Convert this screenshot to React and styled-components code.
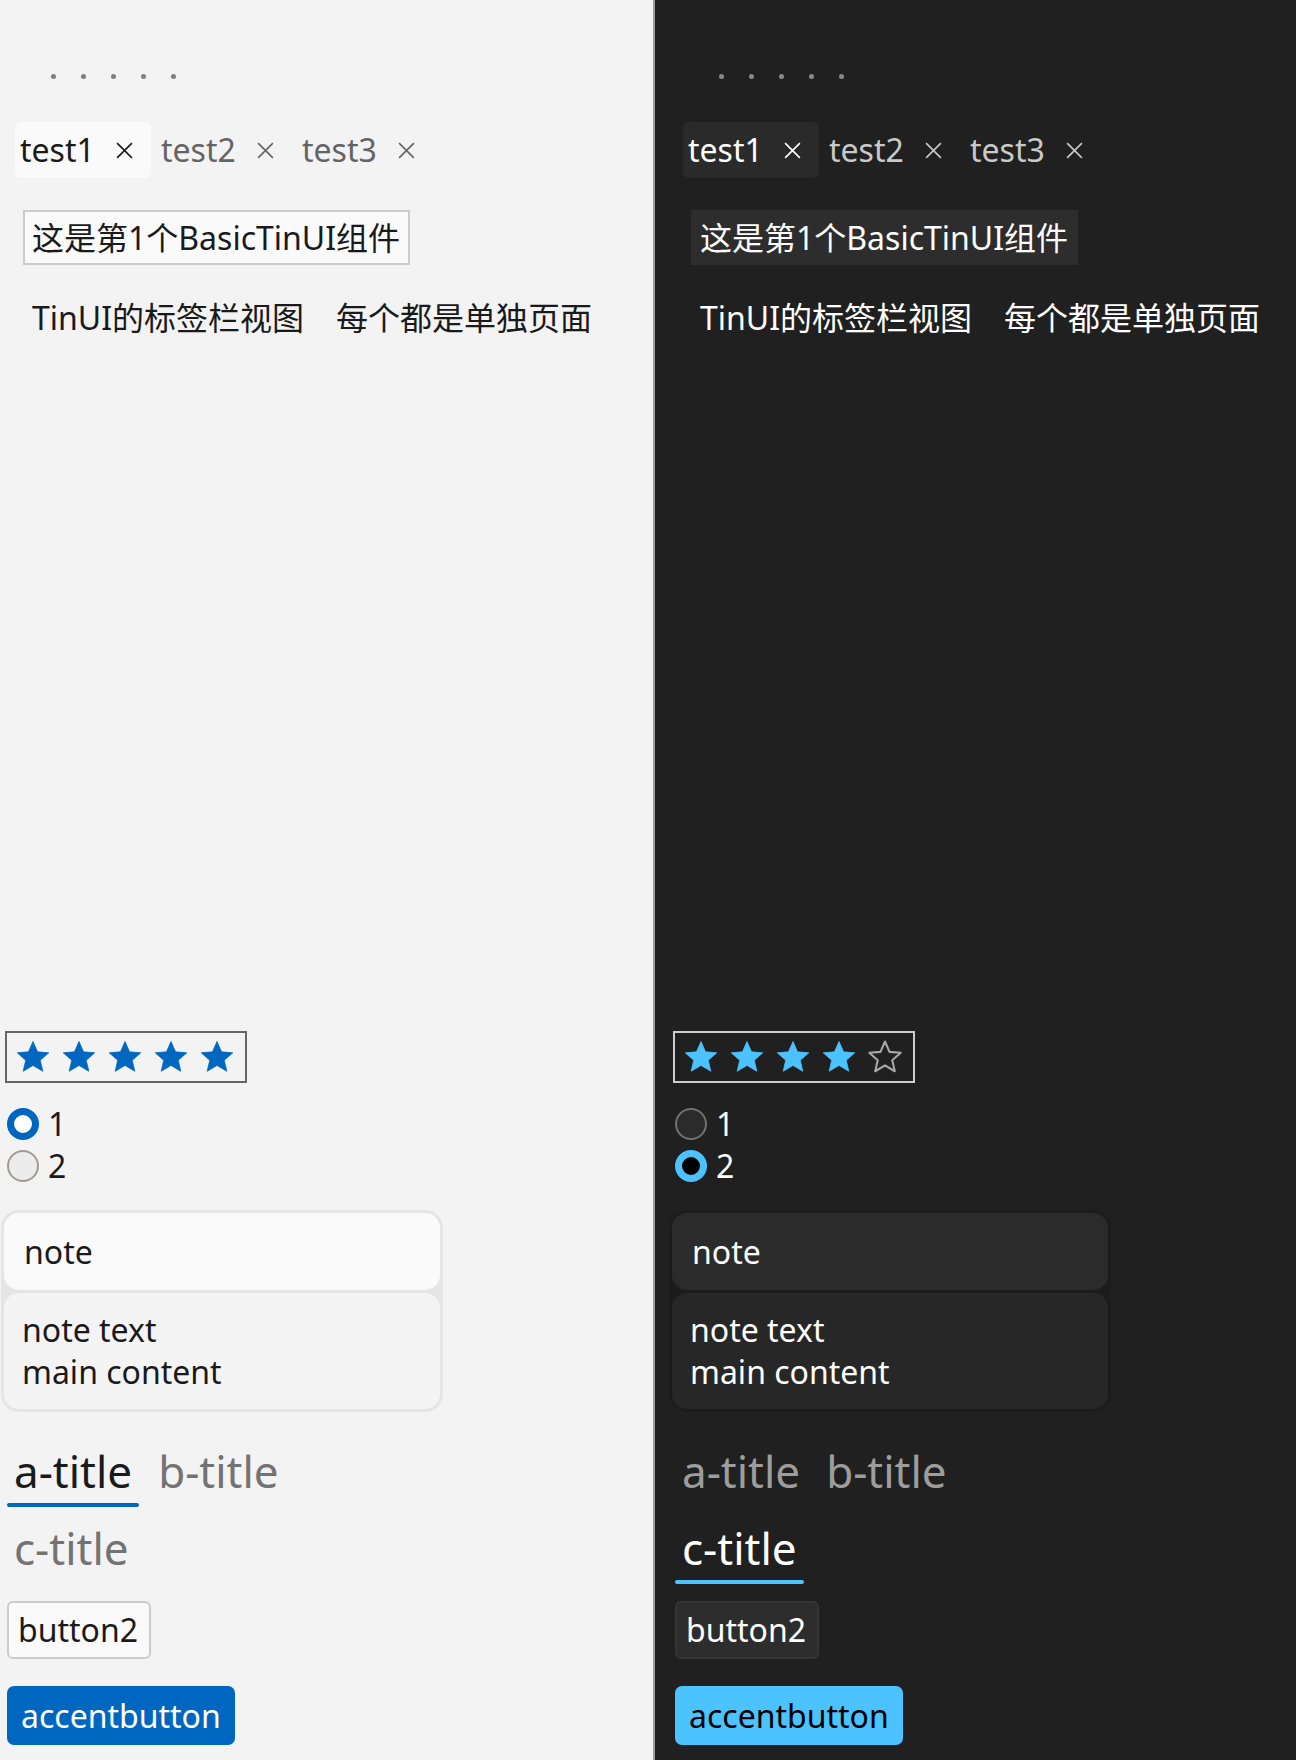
import React, { useState } from 'react';
import styled, { createGlobalStyle, ThemeProvider } from 'styled-components';

const GlobalStyle = createGlobalStyle`
  body {
    margin: 0;
    padding: 0;
    font-family: "Noto Sans", "Noto Sans CJK SC", sans-serif;
  }
`;

const light = {
  bg: '#f3f3f3',
  text: '#1a1a1a',
  muted: '#646464',
  dot: '#7f7f7f',
  tabActive: '#fafafa',
  labelBg: '#fafafa',
  labelBorder: '#cccccc',
  starBorder: '#666666',
  accent: '#0067c0',
  starEmpty: '#9a9a9a',
  radioBg: '#ececec',
  radioBorder: '#a19c98',
  radioCenter: '#ffffff',
  noteOuter: '#e5e5e5',
  noteHead: '#fafafa',
  noteBody: '#f4f4f4',
  titleMuted: '#737373',
  btnBg: '#fafafa',
  btnBorder: '#cccccc',
  accentText: '#ffffff',
  offset: 0,
};

const dark = {
  bg: '#202020',
  text: '#ffffff',
  muted: '#c9c9c9',
  dot: '#8a8a8a',
  tabActive: '#2a2a2a',
  labelBg: '#2d2d2d',
  labelBorder: '#2d2d2d',
  starBorder: '#cccccc',
  accent: '#4cc2ff',
  starEmpty: '#a8a8a8',
  radioBg: '#2b2b2b',
  radioBorder: '#727272',
  radioCenter: '#000000',
  noteOuter: '#1c1c1c',
  noteHead: '#2b2b2b',
  noteBody: '#272727',
  titleMuted: '#9d9d9d',
  btnBg: '#2d2d2d',
  btnBorder: '#353535',
  accentText: '#000000',
  offset: 13,
};

const Page = styled.div`
  display: grid;
  grid-template-columns: 653px 2px 1fr;
  min-height: 1760px;
  width: 1296px;
`;

const Divider = styled.div`
  background: #9a9a9a;
`;

const Panel = styled.div`
  display: flex;
  flex-direction: column;
  align-items: flex-start;
  background: ${(p) => p.theme.bg};
  color: ${(p) => p.theme.text};
  padding-left: ${(p) => p.theme.offset}px;
  font-size: 32px;
  line-height: 44px;
  overflow: hidden;
`;

const Dots = styled.div`
  display: flex;
  gap: 25px;
  margin: 74px 0 0 51px;
`;

const Dot = styled.span`
  width: 5px;
  height: 5px;
  border-radius: 50%;
  background: ${(p) => p.theme.dot};
`;

const TabBar = styled.div`
  display: flex;
  gap: 5px;
  margin: 43px 0 0 15px;
`;

const Tab = styled.div`
  display: flex;
  align-items: center;
  box-sizing: border-box;
  width: 136px;
  height: 56px;
  padding: 0 17px 0 5px;
  border-radius: 6px;
  background: ${(p) => (p.$active ? p.theme.tabActive : 'transparent')};
  color: ${(p) => (p.$active ? p.theme.text : p.theme.muted)};
`;

const Close = styled.svg`
  margin-left: auto;
  width: 19px;
  height: 19px;
`;

const Label = styled.div`
  margin: 32px 0 0 23px;
  height: 51px;
  line-height: 51px;
  padding: 0 8px 0 7px;
  background: ${(p) => p.theme.labelBg};
  border: 2px solid ${(p) => p.theme.labelBorder};
`;

const TextRow = styled.div`
  display: flex;
  gap: 32px;
  margin: 31px 0 0 32px;
`;

const StarBox = styled.div`
  display: flex;
  align-items: center;
  gap: 8px;
  box-sizing: border-box;
  width: 242px;
  height: 52px;
  margin: 691px 0 0 5px;
  padding-left: 7px;
  border: 2px solid ${(p) => p.theme.starBorder};
`;

const RadioGroup = styled.div`
  display: flex;
  flex-direction: column;
  margin: 20px 0 0 7px;
`;

const RadioRow = styled.label`
  display: flex;
  align-items: center;
  gap: 9px;
  height: 42px;
`;

const RadioDot = styled.span`
  box-sizing: border-box;
  width: 32px;
  height: 32px;
  border-radius: 50%;
  background: ${(p) => (p.$on ? p.theme.radioCenter : p.theme.radioBg)};
  border: ${(p) => (p.$on ? `7px solid ${p.theme.accent}` : `2px solid ${p.theme.radioBorder}`)};
`;

const Note = styled.div`
  box-sizing: border-box;
  width: 442px;
  margin: 23px 0 0 1px;
  padding: 3px;
  border-radius: 18px;
  background: ${(p) => p.theme.noteOuter};
  display: flex;
  flex-direction: column;
  gap: 3px;
`;

const NoteHead = styled.div`
  height: 77px;
  line-height: 77px;
  padding-left: 20px;
  border-radius: 15px;
  background: ${(p) => p.theme.noteHead};
`;

const NoteBody = styled.div`
  box-sizing: border-box;
  height: 116px;
  padding: 16px 18px 0;
  line-height: 42px;
  border-radius: 15px;
  background: ${(p) => p.theme.noteBody};
`;

const TitleBar = styled.div`
  display: flex;
  flex-wrap: wrap;
  column-gap: 12px;
  row-gap: 14px;
  width: 300px;
  margin: 32px 0 0 7px;
`;

const TitleItem = styled.div`
  display: flex;
  flex-direction: column;
  align-items: stretch;
  padding: 0 7px;
  font-size: 44px;
  line-height: 54px;
  color: ${(p) => (p.$active ? p.theme.text : p.theme.titleMuted)};
  &::after {
    content: '';
    height: 4px;
    margin: 5px -7px 0;
    border-radius: 2px;
    background: ${(p) => (p.$active ? p.theme.accent : 'transparent')};
  }
`;

const Button = styled.button`
  font: inherit;
  height: 58px;
  margin: 17px 0 0 7px;
  padding: 0 11px 0 9px;
  border-radius: 6px;
  border: 2px solid ${(p) => p.theme.btnBorder};
  background: ${(p) => p.theme.btnBg};
  color: ${(p) => p.theme.text};
`;

const AccentButton = styled(Button)`
  height: 59px;
  margin-top: 27px;
  padding: 0 12px;
  border-radius: 7px;
  border-color: ${(p) => p.theme.accent};
  background: ${(p) => p.theme.accent};
  color: ${(p) => p.theme.accentText};
`;

const StarSvg = styled.svg`
  width: 38px;
  height: 38px;
  fill: ${(p) => (p.$filled ? p.theme.accent : 'none')};
  stroke: ${(p) => (p.$filled ? p.theme.accent : p.theme.starEmpty)};
  stroke-width: ${(p) => (p.$filled ? 0.5 : 1.3)};
`;

const Star = ({ filled }) => (
  <StarSvg viewBox="0 0 24 24" $filled={filled}>
    <path
      d="M12 2.2l2.85 6.55 7.1.62-5.38 4.68 1.62 6.95L12 17.3 5.8 21l1.62-6.95L2.05 9.37l7.1-.62z"
      strokeLinejoin="round"
    />
  </StarSvg>
);

const CloseIcon = () => (
  <Close viewBox="0 0 18 18">
    <path d="M2 2L16 16M16 2L2 16" stroke="currentColor" strokeWidth="1.5" />
  </Close>
);

const tabs = ['test1', 'test2', 'test3'];
const titles = ['a-title', 'b-title', 'c-title'];

const Demo = ({ rating, choice, title }) => {
  const [current, setCurrent] = useState(choice);
  const [activeTitle, setActiveTitle] = useState(title);

  return (
    <Panel>
      <Dots>
        {[0, 1, 2, 3, 4].map((i) => (
          <Dot key={i} />
        ))}
      </Dots>
      <TabBar>
        {tabs.map((t, i) => (
          <Tab key={t} $active={i === 0}>
            {t}
            <CloseIcon />
          </Tab>
        ))}
      </TabBar>
      <Label>这是第1个BasicTinUI组件</Label>
      <TextRow>
        <span>TinUI的标签栏视图</span>
        <span>每个都是单独页面</span>
      </TextRow>
      <StarBox>
        {[0, 1, 2, 3, 4].map((i) => (
          <Star key={i} filled={i < rating} />
        ))}
      </StarBox>
      <RadioGroup>
        {['1', '2'].map((r) => (
          <RadioRow key={r} onClick={() => setCurrent(r)}>
            <RadioDot $on={current === r} />
            {r}
          </RadioRow>
        ))}
      </RadioGroup>
      <Note>
        <NoteHead>note</NoteHead>
        <NoteBody>
          note text
          <br />
          main content
        </NoteBody>
      </Note>
      <TitleBar>
        {titles.map((t) => (
          <TitleItem key={t} $active={activeTitle === t} onClick={() => setActiveTitle(t)}>
            {t}
          </TitleItem>
        ))}
      </TitleBar>
      <Button>button2</Button>
      <AccentButton>accentbutton</AccentButton>
    </Panel>
  );
};

const App = () => (
  <Page>
    <GlobalStyle />
    <ThemeProvider theme={light}>
      <Demo rating={5} choice="1" title="a-title" />
    </ThemeProvider>
    <Divider />
    <ThemeProvider theme={dark}>
      <Demo rating={4} choice="2" title="c-title" />
    </ThemeProvider>
  </Page>
);

export default App;
